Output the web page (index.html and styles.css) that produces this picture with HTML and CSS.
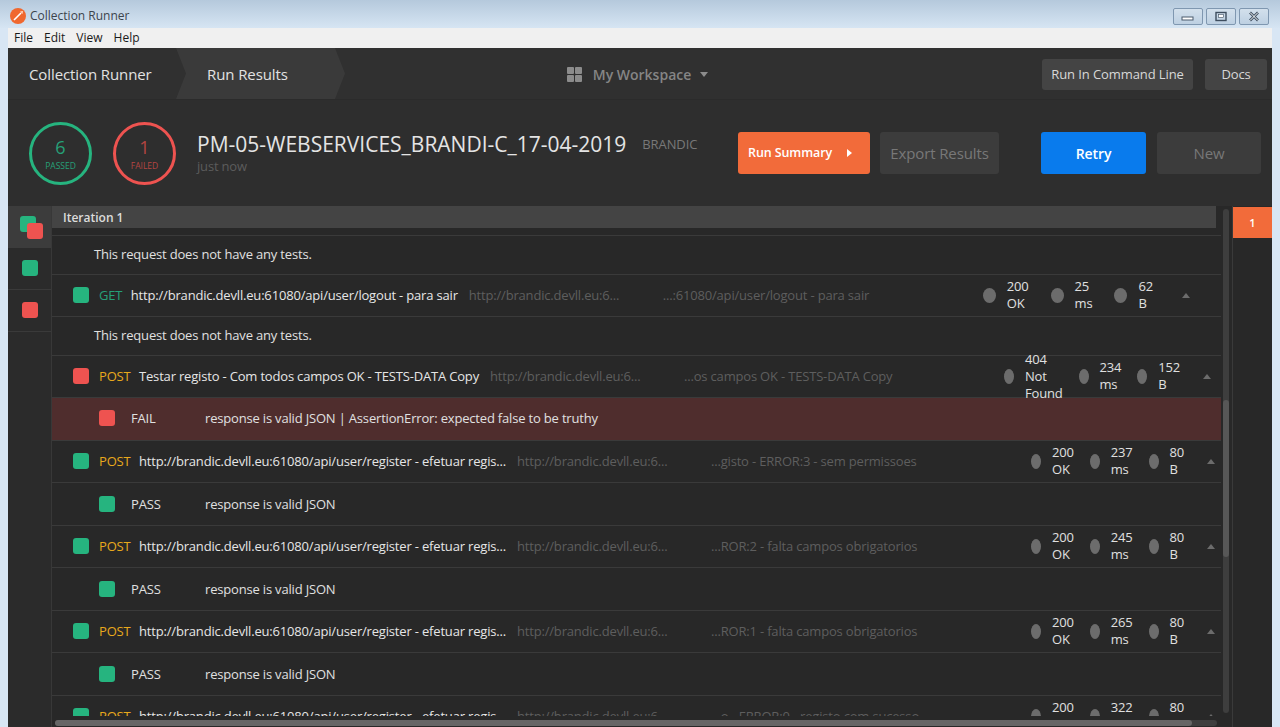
FILE: index.html
```html
<!DOCTYPE html>
<html lang="en">
<head>
  <meta charset="UTF-8">
  <title>Collection Runner</title>
  <link rel="stylesheet" href="styles.css">
</head>
<body>
  <div class="titlebar">
    <svg class="app-logo" width="16" height="16" viewBox="0 0 16 16">
      <circle cx="8" cy="8" r="8" fill="#f0682f"/>
      <path d="M4 12 L11 5" stroke="#fff" stroke-width="1.6"/>
      <path d="M10 3.5 L12.5 6 L13 3 Z" fill="#ffd9c4"/>
    </svg>
    <span class="app-name">Collection Runner</span>
    <div class="win-buttons">
      <div class="win-btn"><svg width="16" height="10" viewBox="0 0 16 10"><rect x="2" y="5" width="11" height="3" fill="#fff" stroke="#4a5a6c"/></svg></div>
      <div class="win-btn"><svg width="14" height="12" viewBox="0 0 14 12"><rect x="2" y="1.5" width="10" height="8" fill="none" stroke="#3d4d5e" stroke-width="1.4"/><rect x="4.5" y="3.5" width="5" height="3" fill="#fff" stroke="#3d4d5e" stroke-width=".6"/></svg></div>
      <div class="win-btn"><svg width="14" height="12" viewBox="0 0 14 12"><path d="M3 1.5 L11 9.5 M11 1.5 L3 9.5" stroke="#3d4d5e" stroke-width="2.6"/><path d="M3 1.5 L11 9.5 M11 1.5 L3 9.5" stroke="#fff" stroke-width="1"/></svg></div>
    </div>
  </div>

  <div class="window">
    <div class="menubar">
      <span>File</span><span>Edit</span><span>View</span><span>Help</span>
    </div>

    <div class="header">
      <div class="tabs">
        <div class="tab">Collection Runner</div>
        <div class="tab tab-active">Run Results</div>
      </div>
      <div class="workspace">
        <svg width="15" height="15" viewBox="0 0 15 15" fill="#8c8c8c">
          <rect width="7" height="7" rx="1"/><rect x="8" width="7" height="7" rx="1"/>
          <rect y="8" width="7" height="7" rx="1"/><rect x="8" y="8" width="7" height="7" rx="1"/>
        </svg>
        <span>My Workspace</span>
        <i class="caret-down"></i>
      </div>
      <div class="header-actions">
        <button class="head-btn cli">Run In Command Line</button>
        <button class="head-btn docs">Docs</button>
      </div>
    </div>

    <div class="summary">
      <div class="circle passed"><b>6</b><small>PASSED</small></div>
      <div class="circle failed"><b>1</b><small>FAILED</small></div>
      <div class="run-info">
        <div class="run-line">
          <span class="run-name">PM-05-WEBSERVICES_BRANDI-C_17-04-2019</span>
          <span class="run-env">BRANDIC</span>
        </div>
        <div class="run-time">just now</div>
      </div>
      <div class="actions">
        <button class="btn btn-summary">Run Summary<i class="caret-right"></i></button>
        <button class="btn btn-muted btn-export">Export Results</button>
        <button class="btn btn-retry">Retry</button>
        <button class="btn btn-muted btn-new">New</button>
      </div>
    </div>

    <div class="results">
      <div class="side">
        <div class="side-item active">
          <span class="square green stack-back"></span>
          <span class="square red stack-front"></span>
        </div>
        <div class="side-item"><span class="square green"></span></div>
        <div class="side-item"><span class="square red"></span></div>
      </div>

      <div class="main">
        <div class="iteration">Iteration 1</div>
        <div class="list">
          <div class="note">This request does not have any tests.</div>

          <div class="req wide">
            <span class="square green"></span>
            <span class="method get">GET</span>
            <span class="req-name">http://brandic.devll.eu:61080/api/user/logout - para sair</span>
            <span class="url-a">http://brandic.devll.eu:6...</span>
            <span class="url-b">...:61080/api/user/logout - para sair</span>
            <div class="stat"><i></i><span>200 OK</span></div>
            <div class="stat"><i></i><span>25 ms</span></div>
            <div class="stat"><i></i><span>62 B</span></div>
            <i class="caret-up"></i>
          </div>
          <div class="note">This request does not have any tests.</div>

          <div class="req">
            <span class="square red"></span>
            <span class="method post">POST</span>
            <span class="req-name">Testar registo - Com todos campos OK - TESTS-DATA Copy</span>
            <span class="url-a">http://brandic.devll.eu:6...</span>
            <span class="url-b">...os campos OK - TESTS-DATA Copy</span>
            <div class="stat"><i></i><span>404 Not Found</span></div>
            <div class="stat"><i></i><span>234 ms</span></div>
            <div class="stat"><i></i><span>152 B</span></div>
            <i class="caret-up"></i>
          </div>
          <div class="test fail">
            <span class="square red"></span>
            <span class="test-state">FAIL</span>
            <span>response is valid JSON | AssertionError: expected false to be truthy</span>
          </div>

          <div class="req">
            <span class="square green"></span>
            <span class="method post">POST</span>
            <span class="req-name">http://brandic.devll.eu:61080/api/user/register - efetuar regis...</span>
            <span class="url-a">http://brandic.devll.eu:6...</span>
            <span class="url-b">...gisto - ERROR:3 - sem permissoes</span>
            <div class="stat"><i></i><span>200 OK</span></div>
            <div class="stat"><i></i><span>237 ms</span></div>
            <div class="stat"><i></i><span>80 B</span></div>
            <i class="caret-up"></i>
          </div>
          <div class="test">
            <span class="square green"></span>
            <span class="test-state">PASS</span>
            <span>response is valid JSON</span>
          </div>

          <div class="req">
            <span class="square green"></span>
            <span class="method post">POST</span>
            <span class="req-name">http://brandic.devll.eu:61080/api/user/register - efetuar regis...</span>
            <span class="url-a">http://brandic.devll.eu:6...</span>
            <span class="url-b">...ROR:2 - falta campos obrigatorios</span>
            <div class="stat"><i></i><span>200 OK</span></div>
            <div class="stat"><i></i><span>245 ms</span></div>
            <div class="stat"><i></i><span>80 B</span></div>
            <i class="caret-up"></i>
          </div>
          <div class="test">
            <span class="square green"></span>
            <span class="test-state">PASS</span>
            <span>response is valid JSON</span>
          </div>

          <div class="req">
            <span class="square green"></span>
            <span class="method post">POST</span>
            <span class="req-name">http://brandic.devll.eu:61080/api/user/register - efetuar regis...</span>
            <span class="url-a">http://brandic.devll.eu:6...</span>
            <span class="url-b">...ROR:1 - falta campos obrigatorios</span>
            <div class="stat"><i></i><span>200 OK</span></div>
            <div class="stat"><i></i><span>265 ms</span></div>
            <div class="stat"><i></i><span>80 B</span></div>
            <i class="caret-up"></i>
          </div>
          <div class="test">
            <span class="square green"></span>
            <span class="test-state">PASS</span>
            <span>response is valid JSON</span>
          </div>

          <div class="req">
            <span class="square green"></span>
            <span class="method post">POST</span>
            <span class="req-name">http://brandic.devll.eu:61080/api/user/register - efetuar regis...</span>
            <span class="url-a">http://brandic.devll.eu:6...</span>
            <span class="url-b">...o - ERROR:0 - registo com sucesso</span>
            <div class="stat"><i></i><span>200 OK</span></div>
            <div class="stat"><i></i><span>322 ms</span></div>
            <div class="stat"><i></i><span>80 B</span></div>
            <i class="caret-up"></i>
          </div>
        </div>
        <div class="vscroll"><div class="vthumb"></div></div>
        <div class="hscroll"><div class="hthumb"></div></div>
      </div>

      <div class="iter-panel">
        <div class="iter-num">1</div>
      </div>
    </div>
  </div>
</body>
</html>
```

FILE: styles.css
```css
* {
  box-sizing: border-box;
}

body {
  margin: 0;
  height: 100vh;
  overflow: hidden;
  font-family: 'Open Sans', sans-serif;
  font-size: 13px;
  color: #e0e0e0;
  background-color: #d8e6f4;
}

button {
  font-family: inherit;
  border: none;
  cursor: pointer;
}

/* window chrome */
.titlebar {
  height: 28px;
  display: flex;
  align-items: flex-start;
  padding: 8px 11px 0 10px;
  background: linear-gradient(#b5c9dc, #d6e5f3);
}

.app-logo {
  margin-right: 4px;
}

.app-name {
  font-size: 12px;
  line-height: 16px;
  color: #3c444c;
}

.win-buttons {
  margin-left: auto;
  display: flex;
  gap: 3px;
}

.win-btn {
  width: 30px;
  height: 17px;
  display: flex;
  align-items: center;
  justify-content: center;
  border: 1px solid #7f97b0;
  border-radius: 2px;
  background: linear-gradient(#d3e0ec, #bdd0e2);
}

.window {
  margin: 0 8px;
  height: 699px;
  display: flex;
  flex-direction: column;
  background-color: #282828;
}

.menubar {
  height: 20px;
  flex: none;
  display: flex;
  align-items: center;
  gap: 11px;
  padding: 0 0 1px 6px;
  font-size: 12px;
  color: #1a1a1a;
  background-color: #f0f0f0;
}

/* top header */
.header {
  height: 52px;
  flex: none;
  display: flex;
  align-items: center;
  padding-right: 5px;
  background-color: #303030;
  border-bottom: 1px solid #2b2b2b;
}

.tabs {
  flex: 1;
  height: 100%;
  display: flex;
  font-size: 15px;
  letter-spacing: -0.1px;
  color: #e2e2e2;
}

.tab {
  display: flex;
  align-items: center;
  padding-left: 21px;
  width: 168px;
}

.tab-active {
  width: 169px;
  padding-left: 31px;
  background-color: #3a3a3a;
  clip-path: polygon(0 0, calc(100% - 10px) 0, 100% 50%, calc(100% - 10px) 100%, 0 100%, 10px 50%);
}

.workspace {
  display: flex;
  align-items: center;
  padding-top: 1px;
  font-size: 14px;
  font-weight: 600;
  color: #858585;
}

.workspace span {
  margin-left: 11px;
}

.caret-down {
  margin-left: 9px;
  border-left: 4px solid transparent;
  border-right: 4px solid transparent;
  border-top: 5px solid #8c8c8c;
}

.header-actions {
  flex: 1;
  display: flex;
  justify-content: flex-end;
  gap: 12px;
  padding-top: 1px;
}

.head-btn {
  height: 31px;
  font-size: 13px;
  letter-spacing: -0.1px;
  color: #d8d8d8;
  background-color: #444;
  border-radius: 3px;
}

.cli {
  width: 151px;
}

.docs {
  width: 62px;
}

/* run summary */
.summary {
  height: 106px;
  flex: none;
  display: flex;
  align-items: center;
  padding: 0 11px 0 21px;
  background-color: #2e2e2e;
}

.circle {
  width: 63px;
  height: 63px;
  margin-right: 21px;
  padding-top: 2px;
  flex: none;
  display: flex;
  flex-direction: column;
  align-items: center;
  justify-content: center;
  border: 3px solid;
  border-radius: 50%;
}

.circle b {
  font-size: 18px;
  font-weight: 400;
  line-height: 20px;
}

.circle small {
  margin-top: 3px;
  font-size: 8.5px;
  line-height: 11px;
}

.passed {
  border-color: #26b47f;
  color: #26a078;
}

.failed {
  border-color: #ee5350;
  color: #b54542;
}

.run-info {
  margin-top: -4px;
}

.run-line {
  display: flex;
  align-items: center;
}

.run-name {
  font-size: 21px;
  line-height: 30px;
  color: #e4e4e4;
}

.run-env {
  margin-left: 16px;
  font-size: 13px;
  letter-spacing: -0.1px;
  color: #787878;
}

.run-time {
  color: #5c5c5c;
  line-height: 14px;
  letter-spacing: -0.18px;
}

.actions {
  margin-left: auto;
  display: flex;
}

.btn {
  height: 42px;
  border-radius: 3px;
  font-size: 15px;
  letter-spacing: -0.1px;
}

.btn-summary {
  width: 132px;
  margin-right: 10px;
  padding: 0 0 2px 10px;
  text-align: left;
  font-size: 12.5px;
  font-weight: 600;
  color: #fff;
  background-color: #f26b3a;
}

.caret-right {
  display: inline-block;
  margin-left: 15px;
  border-top: 4px solid transparent;
  border-bottom: 4px solid transparent;
  border-left: 5px solid #fff;
}

.btn-muted {
  color: #787878;
  background-color: #3c3c3c;
}

.btn-export {
  width: 119px;
  margin-right: 42px;
}

.btn-retry {
  width: 105px;
  margin-right: 11px;
  font-weight: 600;
  font-size: 14px;
  color: #fff;
  background-color: #097bed;
}

.btn-new {
  width: 104px;
}

/* results area */
.results {
  flex: 1;
  min-height: 0;
  display: flex;
}

.side {
  width: 44px;
  flex: none;
  background-color: #2b2b2b;
  border-right: 1px solid #383838;
}

.side-item {
  position: relative;
  height: 42px;
  padding-bottom: 1px;
  display: flex;
  align-items: center;
  justify-content: center;
  border-bottom: 1px solid #3a3a3a;
}

.side-item.active {
  background-color: #3c3c3c;
  border-bottom: none;
}

.square {
  display: block;
  width: 16px;
  height: 16px;
  flex: none;
  border-radius: 3px;
}

.green {
  background-color: #26b47f;
}

.red {
  background-color: #ee5350;
}

.stack-back {
  position: absolute;
  left: 12px;
  top: 10px;
}

.stack-front {
  position: absolute;
  left: 19px;
  top: 17px;
}

.main {
  position: relative;
  width: 1180px;
  flex: none;
  padding-bottom: 11px;
  display: flex;
  flex-direction: column;
}

.iteration {
  height: 22px;
  flex: none;
  margin-right: 16px;
  padding: 1px 0 0 11px;
  font-weight: 600;
  font-size: 12px;
  line-height: 21px;
  color: #dcdcdc;
  background-color: #444;
}

.list {
  flex: 1;
  min-height: 0;
  overflow: hidden;
  margin-top: 7px;
  margin-right: 11px;
  border-top: 1px solid #3a3a3a;
  letter-spacing: -0.18px;
}

.note {
  height: 39px;
  display: flex;
  align-items: center;
  padding: 0 0 3px 42px;
  border-bottom: 1px solid #3a3a3a;
}

.req {
  height: 42px;
  display: flex;
  align-items: center;
  padding: 0 0 1px 21px;
  border-bottom: 1px solid #3a3a3a;
  white-space: nowrap;
}

.method {
  margin-left: 10px;
  margin-right: 8.5px;
}

.get {
  color: #26a078;
}

.post {
  color: #e8a91c;
}

.req-name {
  color: #e6e6e6;
}

.url-a {
  width: 194px;
  margin-left: 11px;
  flex: none;
  color: #5e5e5e;
}

.url-b {
  width: 320px;
  flex: none;
  color: #5e5e5e;
}

.stat {
  display: flex;
  align-items: center;
  margin-right: 16px;
}

.stat i {
  width: 10px;
  height: 15px;
  margin-right: 11px;
  flex: none;
  border-radius: 50%;
  background-color: #6c6c6c;
}

.stat span {
  width: min-content;
  white-space: normal;
  line-height: 17px;
}

.wide .stat {
  margin-right: 22px;
}

.wide .stat i {
  width: 13px;
}

.caret-up {
  margin-left: 7px;
  border-left: 4.5px solid transparent;
  border-right: 4.5px solid transparent;
  border-bottom: 5px solid #6c6c6c;
}

.test {
  height: 43px;
  display: flex;
  align-items: center;
  padding-left: 47px;
  border-bottom: 1px solid #3a3a3a;
}

.test-state {
  width: 74px;
  margin-left: 16px;
  flex: none;
}

.fail {
  padding-bottom: 2px;
  background-color: #4f2d2d;
}

/* overlay scrollbars */
.vscroll {
  position: absolute;
  left: 1171px;
  top: 3px;
  bottom: 14px;
  width: 6px;
  border-radius: 3px;
  background-color: #3e3e3e;
}

.vthumb {
  position: absolute;
  top: 191px;
  left: 0;
  width: 100%;
  height: 157px;
  border-radius: 3px;
  background-color: #575757;
}

.hscroll {
  position: absolute;
  left: 3px;
  bottom: 1px;
  width: 1162px;
  height: 6px;
  border-radius: 3px;
  background-color: #3e3e3e;
}

.hthumb {
  width: 1137px;
  height: 100%;
  border-radius: 3px;
  background-color: #666;
}

.iter-panel {
  flex: 1;
  border-left: 1px solid #3a3a3a;
  padding-top: 1px;
  background-color: #282828;
}

.iter-num {
  height: 31px;
  font-size: 11px;
  font-weight: 600;
  line-height: 31px;
  text-align: center;
  color: #fff;
  background-color: #f26b3a;
}
```
